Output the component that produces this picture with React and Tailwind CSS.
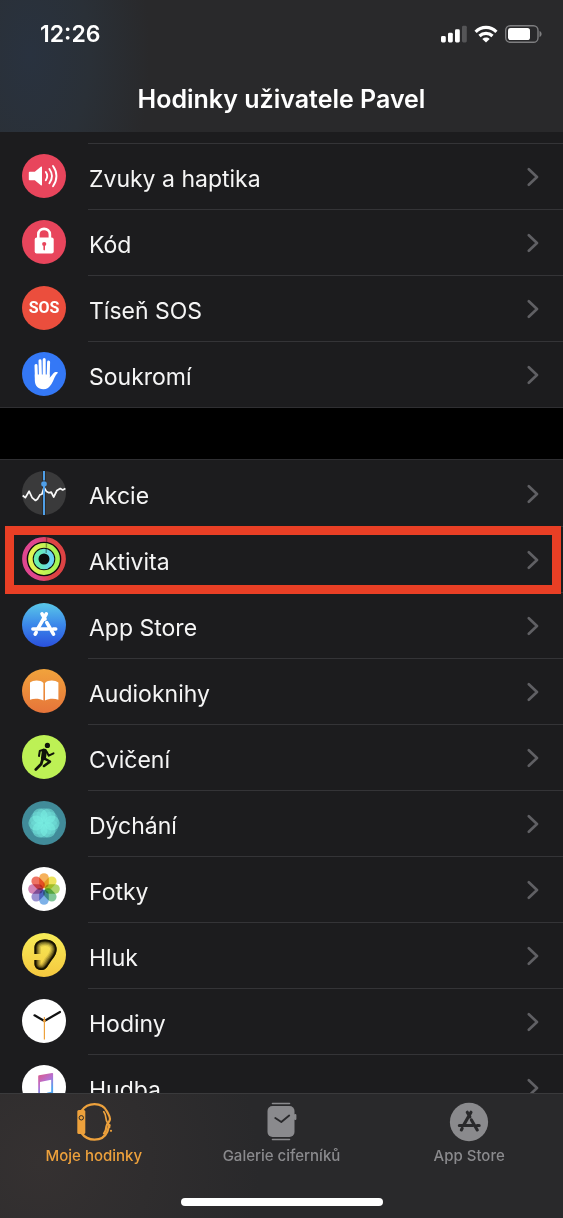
const SoundIcon = () => (
    <svg className="w-11 h-11" viewBox="0 0 44 44" fill="none">
        <circle cx="22" cy="22" r="22" fill="#e8455c" />
        <path d="M7.6 17.8h5.2l6-5c.6-.5 1.2-.2 1.2.5v17.4c0 .7-.6 1-1.2.5l-6-5H7.6c-.5 0-.8-.3-.8-.8v-6.8c0-.5.3-.8.8-.8z" fill="#fff" />
        <path d="M23.8 18c1.8 2.6 1.8 5.6 0 8.2M27.4 15c3.2 4.4 3.2 9.8 0 14.2M31 12c4.6 6.2 4.6 14 0 20.2" stroke="#fff" strokeWidth="1.9" strokeLinecap="round" />
    </svg>
);

const LockIcon = () => (
    <svg className="w-11 h-11" viewBox="0 0 44 44" fill="none">
        <circle cx="22" cy="22" r="22" fill="#e8455c" />
        <path d="M16.3 19v-4.6c0-7.4 11.6-7.4 11.6 0V19" stroke="#fff" strokeWidth="2.6" />
        <rect x="12.7" y="17.5" width="19" height="16" rx="2" fill="#fff" />
        <circle cx="22.2" cy="24" r="2.1" fill="#e8455c" />
        <path d="M22.2 24v5.6" stroke="#e8455c" strokeWidth="1.6" strokeLinecap="round" />
    </svg>
);

const SosIcon = () => (
    <span className="w-11 h-11 rounded-full bg-[#eb4e3d] flex items-center justify-center text-white text-base font-bold font-['Roboto',sans-serif]">
        SOS
    </span>
);

const HandIcon = () => (
    <svg className="w-11 h-11" viewBox="0 0 44 44" fill="none">
        <circle cx="22" cy="22" r="22" fill="#3478f6" />
        <path d="M14 13.5l.4 12M18 8.8l.4 15M22.2 7.6V24M26.6 10l-.4 14" stroke="#fff" strokeWidth="3" strokeLinecap="round" />
        <path d="M12.8 22.5h14.9v3.2c1.8-1.6 3.3-4.4 5-5.4 1.5-.8 3.400-.3 3.200.4-3 2.600-4 7.200-6.400 11.200-2.200 3.500-4.500 5.300-8.100 5.300-5.600 0-8.400-3.600-8.600-9z" fill="#fff" />
    </svg>
);

const StocksIcon = () => (
    <svg className="w-11 h-11" viewBox="0 0 44 44" fill="none">
        <circle cx="22" cy="22" r="22" fill="#3a3a3b" />
        <path d="M22 0v44" stroke="#222" strokeWidth="3.2" />
        <path d="M.7 24.5l2.600 2.200 3.800-6.500 3 6.500 3.400 2.800 2-1.500 2.400-4.200 2-.5 2.100-7 2.500 4.300 2.400 1.200 2.200-.8 2.600 5 3.200-6.500 3.400-2 2.400 1.500 2.700-1.500" stroke="#f8f8f8" strokeWidth="1.7" strokeLinejoin="round" />
        <path d="M22 0v9.500M22 13v31" stroke="#4f9fe8" strokeWidth="2" />
        <circle cx="22" cy="13" r="2.8" fill="#4f9fe8" />
    </svg>
);

const ActivityIcon = () => (
    <svg className="w-11 h-11" viewBox="0 0 44 44" fill="none">
        <defs>
            <linearGradient id="ring-move" x1="0" x2="1">
                <stop offset="0.3" stopColor="#e0468f" />
                <stop offset="0.7" stopColor="#dd4344" />
            </linearGradient>
            <linearGradient id="ring-exercise" x1="0" x2="1">
                <stop offset="0.1" stopColor="#e0f352" />
                <stop offset="0.9" stopColor="#a6f455" />
            </linearGradient>
            <linearGradient id="ring-stand" x1="0" x2="1">
                <stop offset="0.2" stopColor="#69edb0" />
                <stop offset="0.9" stopColor="#6ad4f4" />
            </linearGradient>
        </defs>
        <circle cx="22" cy="22" r="22" fill="#0c0c0c" />
        <circle cx="22" cy="22" r="19.6" stroke="url(#ring-move)" strokeWidth="4.6" />
        <circle cx="22" cy="22" r="13.6" stroke="url(#ring-exercise)" strokeWidth="4.6" />
        <circle cx="22" cy="22" r="7.9" stroke="url(#ring-stand)" strokeWidth="4.8" />
        <path d="M24.6.5v4.6M24.4 6.5v4.3M24.2 12v4" stroke="#000" strokeOpacity="0.35" strokeWidth="1.4" />
    </svg>
);

const AppStoreMark = ({ color }) => (
    <g stroke={color} strokeWidth="3.6" strokeLinecap="round">
        <path d="M24.3 10.8l-8.300 14.500M14.200 29.300l-1 1.800M20 10.800l3 5.200M24.800 19.600l6.700 11.500" />
        <path d="M10.900 26h15.300M31.300 26h2.400" />
    </g>
);

const AppStoreIcon = () => (
    <svg className="w-11 h-11" viewBox="0 0 44 44" fill="none">
        <defs>
            <linearGradient id="store" x1="0" y1="0" x2="0" y2="1">
                <stop stopColor="#5ac8e8" />
                <stop offset="0.5" stopColor="#3b87ea" />
                <stop offset="1" stopColor="#2a50dd" />
            </linearGradient>
        </defs>
        <circle cx="22" cy="22" r="22" fill="url(#store)" />
        <AppStoreMark color="#fff" />
    </svg>
);

const BooksIcon = () => (
    <svg className="w-11 h-11" viewBox="0 0 44 44" fill="none">
        <defs>
            <linearGradient id="books" x1="0" y1="0" x2="0" y2="1">
                <stop stopColor="#f1a33c" />
                <stop offset="1" stopColor="#e6743a" />
            </linearGradient>
        </defs>
        <circle cx="22" cy="22" r="22" fill="url(#books)" />
        <path d="M21.400 14c-3-3.200-10-3.200-13.400-.4v17.200c4-1.600 9.700-1.400 13.400.8zM23 14c3-3.200 10-3.200 13.400-.4v17.200c-4-1.600-9.700-1.400-13.400.8z" fill="#fff" />
    </svg>
);

const WorkoutIcon = () => (
    <svg className="w-11 h-11" viewBox="0 0 44 44" fill="none">
        <circle cx="22" cy="22" r="22" fill="#bdf155" />
        <circle cx="25.4" cy="10.4" r="2.6" fill="#10140a" />
        <g stroke="#10140a" strokeLinecap="round" strokeLinejoin="round">
            <path d="M22.400 16.200l-.9 6.600" strokeWidth="5" />
            <path d="M21.500 14.600l-3.700 1.400-.8 5M24.500 16.500l2.300 4.200 4.700-2.400" strokeWidth="2" />
            <path d="M22.500 23.500l5.400 3.200-5.900 4.300" strokeWidth="2.600" />
            <path d="M20.800 23.500l-1.600 5.500-5.400 5.500" strokeWidth="2.700" />
        </g>
    </svg>
);

const BreatheIcon = () => (
    <svg className="w-11 h-11" viewBox="0 0 44 44" fill="none">
        <circle cx="22" cy="22" r="22" fill="#418b99" />
        {[0, 60, 120, 180, 240, 300].map((angle) => (
            <circle key={angle} cx="22" cy="14.500" r="7.500" fill="#6fe0dc" fillOpacity="0.350" transform={`rotate(${angle} 22 22)`} />
        ))}
        {[30, 90, 150, 210, 270, 330].map((angle) => (
            <circle key={angle} cx="22" cy="14" r="7.600" fill="#7bf3e6" fillOpacity="0.500" transform={`rotate(${angle} 22 22)`} />
        ))}
    </svg>
);

const petals = ['#f5a84a', '#ebe04a', '#a5d05c', '#72c08c', '#6fa9e6', '#9085cc', '#cd78ae', '#ec6452'];

const PhotosIcon = () => (
    <svg className="w-11 h-11" viewBox="0 0 44 44" fill="none">
        <circle cx="22" cy="22" r="22" fill="#fff" />
        {petals.map((fill, i) => (
            <rect
                key={fill}
                x="17.2"
                y="6.2"
                width="9.6"
                height="15"
                rx="4.8"
                fill={fill}
                fillOpacity="0.9"
                className="mix-blend-multiply"
                transform={`rotate(${i * 45} 22 22)`}
            />
        ))}
    </svg>
);

const earPath = 'M12.5 21v-6.500C12.500 9.500 17 6.500 23 6.500c7 0 11.600 4 11.600 9.500 0 5-2.600 8-5.600 12-3.200 4.400-4.600 9-9.200 9-4.600 0-7.300-2.400-7.300-6.500V27';

const NoiseIcon = () => (
    <svg className="w-11 h-11" viewBox="0 0 44 44" fill="none">
        <defs>
            <linearGradient id="noise" x1="0" y1="0" x2="0" y2="1">
                <stop stopColor="#f7ec58" />
                <stop offset="1" stopColor="#f5c83f" />
            </linearGradient>
            <clipPath id="ear">
                <path d={`${earPath}z`} />
            </clipPath>
        </defs>
        <circle cx="22" cy="22" r="22" fill="url(#noise)" />
        <g clipPath="url(#ear)" stroke="#161200">
            <path d={earPath} strokeWidth="13" strokeOpacity="0.12" />
            <path d={earPath} strokeWidth="10.5" strokeOpacity="0.2" />
            <path d={earPath} strokeWidth="8" strokeOpacity="0.3" />
            <path d={earPath} strokeWidth="5.500" strokeOpacity="0.500" />
            <path d={earPath} strokeWidth="3.400" />
        </g>
    </svg>
);

const ClockIcon = () => (
    <svg className="w-11 h-11" viewBox="0 0 44 44" fill="none">
        <circle cx="22" cy="22" r="22" fill="#fff" />
        <path d="M22.4 22L12.500 16.300M22.400 22l15.600-9" stroke="#111" strokeWidth="2.200" strokeLinecap="round" />
        <path d="M22.4 18v22.500" stroke="#eda13c" strokeWidth="1.200" />
        <circle cx="22.4" cy="22" r="1.4" fill="#eda13c" />
    </svg>
);

const MusicIcon = () => (
    <svg className="w-11 h-11" viewBox="0 0 44 44" fill="none">
        <defs>
            <linearGradient id="note" x1="0" y1="0" x2="0.6" y2="1">
                <stop offset="0.1" stopColor="#e2557a" />
                <stop offset="0.5" stopColor="#b770d2" />
                <stop offset="0.8" stopColor="#4fa3f0" />
            </linearGradient>
        </defs>
        <circle cx="22" cy="22" r="22" fill="#fff" />
        <path d="M16.2 11.4c0-.6.3-1 .9-1.100l13-2.400c.6-.1 1 .2 1 .8v20.200c0 5.600-8.400 6.600-8.400 2.200 0-3.600 4.200-3.800 6.500-4.400V14.800l-11.200 2.200v15.500c0 5.600-8.400 6.600-8.400 2.200 0-3.600 4.300-3.800 6.600-4.400z" fill="url(#note)" />
    </svg>
);

const Chevron = () => (
    <svg className="w-3 h-5 mr-6 shrink-0" viewBox="0 0 12 20" fill="none">
        <path d="M1.800 2.200L10 10l-8.200 7.800" stroke="#606064" strokeWidth="2.600" strokeLinecap="round" strokeLinejoin="round" />
    </svg>
);

const generalItems = [
    { label: 'Zvuky a haptika', icon: <SoundIcon /> },
    { label: 'Kód', icon: <LockIcon /> },
    { label: 'Tíseň SOS', icon: <SosIcon /> },
    { label: 'Soukromí', icon: <HandIcon /> }
];

const appItems = [
    { label: 'Akcie', icon: <StocksIcon /> },
    { label: 'Aktivita', icon: <ActivityIcon />, highlighted: true },
    { label: 'App Store', icon: <AppStoreIcon /> },
    { label: 'Audioknihy', icon: <BooksIcon /> },
    { label: 'Cvičení', icon: <WorkoutIcon /> },
    { label: 'Dýchání', icon: <BreatheIcon /> },
    { label: 'Fotky', icon: <PhotosIcon /> },
    { label: 'Hluk', icon: <NoiseIcon /> },
    { label: 'Hodiny', icon: <ClockIcon /> },
    { label: 'Hudba', icon: <MusicIcon /> }
];

const Row = ({ item, divider }) => (
    <li className="relative">
        <a href="#" className="flex items-center h-[66px] pl-[22px] gap-[22px]">
            <span className="shrink-0">{item.icon}</span>
            <span className={`flex-1 self-stretch flex items-center justify-between pl-px border-t ${divider ? 'border-[#343437]' : 'border-transparent'}`}>
                <span className="pt-1 text-[23px] leading-8">{item.label}</span>
                <Chevron />
            </span>
        </a>
        {item.highlighted && (
            <span className="absolute z-10 top-0 -bottom-0.5 left-[5px] right-0.5 border-[9px] border-[#e93f25] pointer-events-none" />
        )}
    </li>
);

const WatchTabIcon = () => (
    <svg className="w-10 h-10" viewBox="0 0 40 40" fill="none">
        <rect x="3.3" y="8" width="8" height="24" rx="1.5" fill="#eda13c" />
        <circle cx="7.3" cy="15.8" r="2.2" stroke="#2b2a2b" strokeWidth="1" />
        <g stroke="#eda13c" strokeWidth="2.2" strokeLinecap="round" strokeLinejoin="round">
            <path d="M7.500 9C10.500 4.700 15 2.200 20.500 2.200c5.500 0 10.300 2.800 12.500 7.300 1.300 2.700 3 4.800 3 7.500 0 3-3.200 3.800-3.600 7.500-.2 3-.9 5.300-2.400 7" />
            <path d="M7.500 31c3 4.300 7.500 6.600 13 6.600 6 0 10.800-3.200 12.800-7.800 1-2.400.9-4.500 2.300-6.600" />
            <path d="M29.800 9.800c2.600 3.400 1.600 7.200 3.200 10 1.200 2 2.700 3 2.600 5.400" strokeWidth="1.700" />
        </g>
        <circle cx="37" cy="28.8" r="1.100" fill="#eda13c" />
    </svg>
);

const FaceTabIcon = () => (
    <svg className="w-10 h-10" viewBox="0 0 40 40" fill="none">
        <path d="M11.5 1.5h17M11.5 37.500h17" stroke="#8a8a8d" strokeWidth="1.6" strokeLinecap="round" />
        <rect x="6.5" y="4" width="27" height="31" rx="5" fill="#8a8a8d" />
        <rect x="33" y="12" width="2.400" height="6" rx="1" fill="#8a8a8d" />
        <path d="M14.3 16l6 4 7.900-6.500" stroke="#29292b" strokeWidth="1.900" strokeLinecap="round" strokeLinejoin="round" />
    </svg>
);

const StoreTabIcon = () => (
    <svg className="w-10 h-10" viewBox="-1 -1 46 46" fill="none">
        <circle cx="22" cy="22" r="22" fill="#8a8a8d" />
        <AppStoreMark color="#29292b" />
    </svg>
);

const tabs = [
    { label: 'Moje hodinky', icon: <WatchTabIcon />, active: true },
    { label: 'Galerie ciferníků', icon: <FaceTabIcon /> },
    { label: 'App Store', icon: <StoreTabIcon /> }
];

const StatusIcons = () => (
    <div className="flex items-center gap-[7px]">
        <svg className="w-[26px] h-[18px]" viewBox="0 0 26 18">
            <rect x="0" y="11" width="4.8" height="6.500" rx="1.4" fill="#fff" />
            <rect x="7" y="7.800" width="4.8" height="9.700" rx="1.4" fill="#fff" />
            <rect x="14" y="4.300" width="4.8" height="13.200" rx="1.4" fill="#fff" />
            <rect x="21" y="0.800" width="4.8" height="16.700" rx="1.4" fill="#555557" />
        </svg>
        <svg className="w-6 h-[18px]" viewBox="0 0 24 18" fill="none">
            <path d="M1.600 6.800C7.400 1 16.600 1 22.400 6.800M5.500 11c3.600-3.500 9.400-3.500 13 0" stroke="#fff" strokeWidth="3.200" />
            <path d="M12 17.600l-3.700-3.700c2.200-1.900 5.200-1.900 7.400 0z" fill="#fff" />
        </svg>
        <svg className="w-[37px] h-[18px]" viewBox="0 0 37 18" fill="none">
            <rect x="0.700" y="0.700" width="32.300" height="16.600" rx="4.600" stroke="#7e7e80" strokeWidth="1.400" />
            <rect x="3" y="3" width="22" height="12" rx="2.600" fill="#fff" />
            <path d="M34.500 6.100c2.800 1 2.800 4.800 0 5.800z" fill="#7e7e80" />
        </svg>
    </div>
);

export default function App() {
    return (
        <div className="h-screen flex flex-col overflow-hidden bg-black text-[#f5f5f5] font-['Inter',sans-serif]">
            {/* Status bar and title */}
            <header className="shrink-0 h-[132px] bg-[#29292b] bg-[radial-gradient(ellipse_120px_220px_at_30px_55px,#29323f,#2a3037_50%,#29292b)]">
                <div className="flex items-center justify-between pl-10 pr-[21px] pt-[18px]">
                    <span className="text-[23px] leading-8 font-semibold text-white">12:26</span>
                    <StatusIcons />
                </div>
                <h1 className="mt-8 text-center text-[25px] leading-[34px] font-semibold text-white">Hodinky uživatele Pavel</h1>
            </header>

            {/* Settings lists */}
            <main className="flex-1 min-h-0 overflow-y-auto [scrollbar-width:none]">
                <ul className="pt-[11px] bg-[#1c1c1e] border-b border-[#2f2f32]">
                    {generalItems.map((item) => (
                        <Row key={item.label} item={item} divider />
                    ))}
                </ul>
                <ul className="mt-[51px] bg-[#1c1c1e] border-t border-[#2f2f32]">
                    {appItems.map((item, index) => (
                        <Row key={item.label} item={item} divider={index > 0} />
                    ))}
                </ul>
            </main>

            {/* Tab bar */}
            <footer className="shrink-0 h-[125px] flex flex-col justify-between border-t border-[#3a3a3c] bg-[#29292b] bg-[radial-gradient(circle_at_40px_70px,#353131,#29292b_220px)]">
                <nav className="grid grid-cols-3 pt-2">
                    {tabs.map((tab) => (
                        <a
                            key={tab.label}
                            href="#"
                            className={`flex flex-col items-center gap-1 text-[15px] leading-5 font-medium ${
                                tab.active ? 'text-[#eda13c]' : 'text-[#8a8a8d]'
                            }`}
                        >
                            {tab.icon}
                            {tab.label}
                        </a>
                    ))}
                </nav>
                <div className="w-[202px] h-2 mb-3 rounded-full bg-white self-center" />
            </footer>
        </div>
    );
}
